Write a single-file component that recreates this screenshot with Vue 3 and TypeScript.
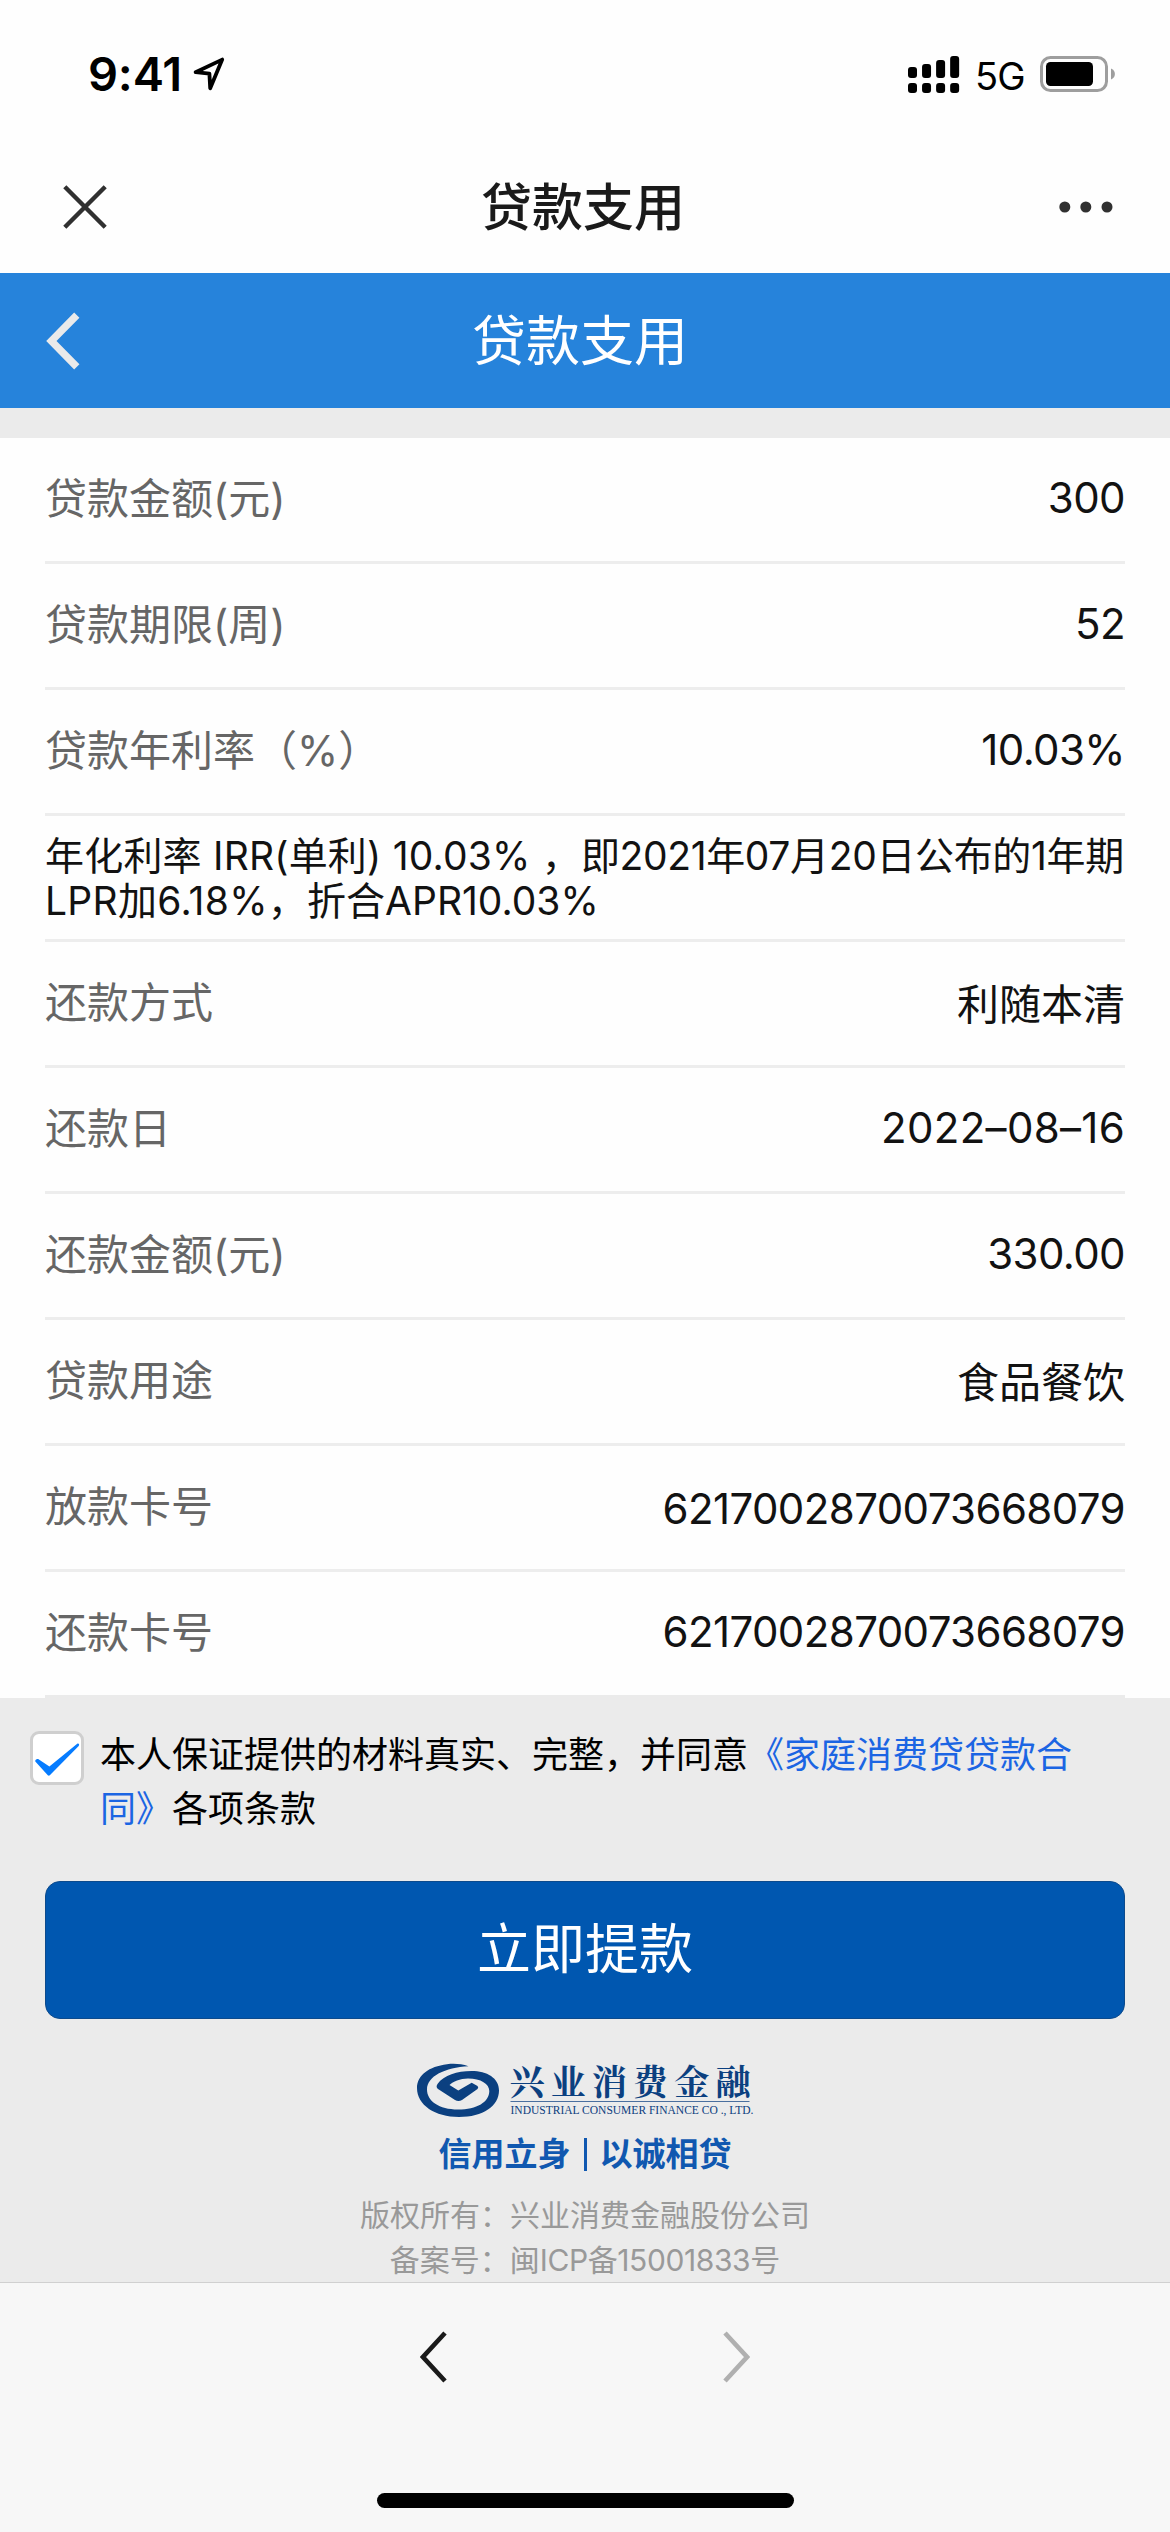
<script setup lang="ts">
interface Row {
  label?: string
  value?: string
  note?: boolean
  kind?: 'card' | 'text' | 'date'
}

const rows: Row[] = [
  { label: '贷款金额(元)', value: '300' },
  { label: '贷款期限(周)', value: '52' },
  { label: '贷款年利率（%）', value: '10.03%' },
  { note: true },
  { label: '还款方式', value: '利随本清', kind: 'text' },
  { label: '还款日', value: '2022–08–16', kind: 'date' },
  { label: '还款金额(元)', value: '330.00' },
  { label: '贷款用途', value: '食品餐饮', kind: 'text' },
  { label: '放款卡号', value: '6217002870073668079', kind: 'card' },
  { label: '还款卡号', value: '6217002870073668079' },
]

const barHeights: number[] = [11, 14, 18, 22]
</script>

<template>
  <div class="screen">
    <header class="status">
      <div class="status-left">
        <span class="time">9:41</span>
        <svg class="location" width="32" height="34" viewBox="0 0 32 34">
          <path d="M2.6 15.2 L29.2 2.6 L17.2 31.2 L16.4 16.6 Z" fill="none" stroke="#000" stroke-width="3.8" stroke-linejoin="round" />
        </svg>
      </div>
      <div class="status-right">
        <svg class="signal" width="52" height="38" viewBox="0 0 52 38">
          <g v-for="(h, i) in barHeights" :key="i">
            <rect :x="i * 14.05" :y="22 - h" width="9" :height="h" rx="3" />
            <rect :x="i * 14.05" y="27" width="9" height="10" rx="3" />
          </g>
        </svg>
        <span class="network">5G</span>
        <svg class="battery" width="76" height="36" viewBox="0 0 76 36">
          <rect x="1.5" y="1.5" width="65" height="33" rx="9" fill="none" stroke="#9e9e9e" stroke-width="3" />
          <rect x="6" y="6" width="47" height="24" rx="4.5" />
          <path d="M71 12.5 C76.2 14.5 76.2 21.5 71 23.5 Z" fill="#9e9e9e" />
        </svg>
      </div>
    </header>

    <nav class="nav">
      <svg width="44" height="44" viewBox="0 0 44 44">
        <path d="M1.8 1.8 L42.2 42.2 M42.2 1.8 L1.8 42.2" stroke="#303030" stroke-width="4.4" />
      </svg>
      <h1 class="nav-title">贷款支用</h1>
      <svg width="54" height="12" viewBox="0 0 54 12" fill="#303030">
        <circle cx="5.8" cy="6" r="5.5" />
        <circle cx="26.8" cy="6" r="5.5" />
        <circle cx="48" cy="6" r="5.5" />
      </svg>
    </nav>

    <div class="banner">
      <svg width="34" height="58" viewBox="0 0 34 58">
        <path d="M30.8 3.2 L5.4 29 L30.8 54.8" fill="none" stroke="#eaeaea" stroke-width="7.4" />
      </svg>
      <h2 class="banner-title">贷款支用</h2>
    </div>

    <main class="content">
      <section class="list">
        <div v-for="(row, i) in rows" :key="i" class="row">
          <p v-if="row.note" class="note">
            <span class="loose">年化利率 IRR(单利) 10.03% ，</span><span class="tight">即2021年07月20日公布的1年期</span><br>
            <span class="looser">LPR加6.18%，</span>折合APR10.03%
          </p>
          <template v-else>
            <span class="label">{{ row.label }}</span>
            <span class="value" :class="row.kind">{{ row.value }}</span>
          </template>
        </div>
      </section>

      <label class="agree">
        <span class="checkbox">
          <svg width="48" height="48" viewBox="0 0 48 48">
            <path d="M2.3 27.6 C1.8 25.2 4.5 24.2 5.9 25.4 L16.4 32.6 L44.2 9.8 C45.6 8.9 46.8 10.5 45.7 12 L16.8 41.3 Q15.8 42.2 14.8 41.3 Z" fill="#067cff" />
          </svg>
        </span>
        <span class="agree-text">本人保证提供的材料真实、完整，并同意<a class="link">《家庭消费贷贷款合同》</a>各项条款</span>
      </label>

      <button class="submit" type="button">立即提款</button>

      <footer class="footer">
        <svg class="logo" width="340" height="60" viewBox="0 0 340 60">
          <path fill="#0b4080" d="M51.5 2.2 C44 -.3 37 -.6 30 .2 C12 2.5 0 11 0 24 C0 41 18 53 42 53 C66 53 82 42 82 26.5 C82 14 70 7 54.5 7 C40 7 27 11 20.5 20 Q18.5 23 21 25 L38 36 Q41.5 38 45 36 L60.5 25 Q62 23.5 60.5 22 L54.7 18.7 L41.3 26.5 L32.5 21 C36 17.5 43 14.5 51 14.5 C64 14.5 72.3 20 72.3 27 C72.3 38 60 45.5 41 45.5 C22 45.5 10 37 10 25.5 C10 12 28 3.5 51.5 2.2 Z" />
          <text class="logo-name" x="92.5" y="31" textLength="241">兴业消费金融</text>
          <path d="M93.5 37.5 H332.5" stroke="#4a6f9f" stroke-width="1.2" />
          <text class="logo-sub" x="93.5" y="50" textLength="243" lengthAdjust="spacingAndGlyphs">INDUSTRIAL CONSUMER FINANCE CO ., LTD.</text>
        </svg>
        <div class="slogan">
          <span>信用立身</span>
          <i class="divider"></i>
          <span>以诚相贷</span>
        </div>
        <p class="copyright">版权所有：兴业消费金融股份公司</p>
        <p class="copyright">备案号：闽<span class="record">ICP备15001833</span>号</p>
      </footer>
    </main>

    <div class="toolbar">
      <div class="arrows">
        <svg width="27" height="52" viewBox="0 0 27 52">
          <path d="M25 2 L3 26 L25 50" fill="none" stroke="#1a1a1a" stroke-width="4.6" />
        </svg>
        <svg width="27" height="52" viewBox="0 0 27 52">
          <path d="M2 2 L24 26 L2 50" fill="none" stroke="#b0b0b0" stroke-width="4.6" />
        </svg>
      </div>
      <div class="home"></div>
    </div>
  </div>
</template>

<style>
body {
  margin: 0;
  background: #fff;
}
</style>

<style scoped>
* {
  box-sizing: border-box;
}
.screen {
  width: 1170px;
  height: 2532px;
  display: flex;
  flex-direction: column;
  overflow: hidden;
  background: #fefefe;
  font-family: Inter, "Noto Sans CJK SC", sans-serif;
}
h1, h2, p {
  margin: 0;
  font-weight: 400;
}
svg {
  display: block;
  flex: none;
}
.status {
  height: 141px;
  padding: 0 54px 0 88px;
  display: flex;
  justify-content: space-between;
  align-items: flex-start;
}
.status-left {
  display: flex;
  padding-top: 44px;
}
.time {
  width: 105px;
  font-size: 47px;
  line-height: 60px;
  font-weight: 600;
  letter-spacing: -0.2px;
}
.location {
  margin-top: 13px;
}
.status-right {
  display: flex;
  padding-top: 56px;
}
.network {
  width: 66px;
  padding-left: 16px;
  font-size: 38px;
  line-height: 41px;
  letter-spacing: -0.8px;
}
.signal {
  margin-right: -1px;
}
.battery {
  margin-left: 15px;
}
.nav {
  height: 132px;
  padding: 0 57px 0 63px;
  display: flex;
  align-items: center;
  justify-content: space-between;
}
.nav-title {
  padding-top: 2px;
  color: #1a1a1a;
  font-size: 51px;
  font-weight: 500;
  line-height: 80px;
}
.banner {
  height: 135px;
  padding: 0 46px;
  display: flex;
  align-items: center;
  background: #2683db;
}
.banner-title {
  margin-left: 392px;
  padding-top: 2px;
  color: #fff;
  font-size: 54px;
  line-height: 80px;
}
.content {
  height: 1874px;
  padding-top: 30px;
  background: #ebebeb;
}
.list {
  padding: 0 45px;
  background: #fefefe;
}
.row {
  height: 126px;
  display: flex;
  justify-content: space-between;
  align-items: center;
  border-bottom: 3px solid #ededed;
  font-size: 42px;
  line-height: 60px;
}
.row:last-child {
  border-bottom-color: #ebebeb;
}
.label {
  color: #666;
  padding-bottom: 2px;
}
.value {
  color: #121212;
  letter-spacing: -0.6px;
  padding-bottom: 3px;
}
.value.text {
  letter-spacing: 0;
  padding: 2px 0 0;
}
.value.date {
  letter-spacing: 0.3px;
}
.value.card {
  padding: 3px 0 0;
}
.note {
  flex: none;
  color: #121212;
  font-size: 39px;
  line-height: 45px;
  white-space: nowrap;
}
.loose {
  letter-spacing: 0.2px;
}
.tight {
  letter-spacing: -0.35px;
}
.looser {
  letter-spacing: 0.3px;
}
.agree {
  display: flex;
  padding: 29px 80px 0 30px;
}
.checkbox {
  width: 54px;
  height: 54px;
  margin-top: 4px;
  border: 3px solid #cfcfcf;
  border-radius: 9px;
  background: #fff;
}
.agree-text {
  width: 990px;
  margin-left: 16px;
  padding-top: 1px;
  color: #000;
  font-size: 36px;
  line-height: 54px;
}
.link {
  color: #1b65e3;
}
.submit {
  display: block;
  width: 1080px;
  height: 138px;
  margin: 45px 45px 0;
  padding: 0;
  border: 1px solid #0c4a8c;
  border-radius: 15px;
  background: #0057b0;
  color: #fff;
  font-family: inherit;
  font-size: 54px;
  line-height: 80px;
}
.footer {
  display: flex;
  flex-direction: column;
  align-items: center;
  padding-top: 45px;
}
.logo {
  margin-left: 4px;
  overflow: visible;
}
.logo-name {
  fill: #0b4080;
  font-family: "Noto Serif CJK SC", "Noto Sans CJK SC", serif;
  font-size: 35px;
  font-weight: 700;
}
.logo-sub {
  fill: #0b4080;
  font-family: "Liberation Serif", serif;
  font-size: 12.8px;
}
.slogan {
  height: 44px;
  margin-top: 8px;
  display: flex;
  align-items: center;
  gap: 13px;
  color: #1058b0;
  font-size: 33px;
  line-height: 44px;
  font-weight: 700;
}
.divider {
  width: 3px;
  height: 33px;
  background: #1058b0;
}
.copyright {
  color: #999;
  font-size: 30px;
  line-height: 45px;
}
.record {
  letter-spacing: -0.4px;
}
.slogan + .copyright {
  margin-top: 17px;
}
.toolbar {
  height: 250px;
  border-top: 1px solid #d0d0d0;
  background: #f7f7f7;
}
.arrows {
  display: flex;
  justify-content: space-between;
  padding: 48px 420px 0;
}
.home {
  width: 417px;
  height: 15px;
  margin: 110px auto 0;
  border-radius: 8px;
  background: #000;
}
</style>
